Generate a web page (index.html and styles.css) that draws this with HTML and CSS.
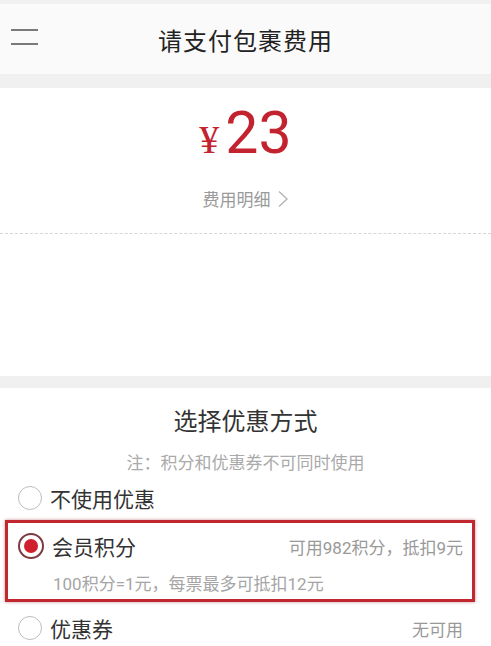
FILE: index.html
```html
<!DOCTYPE html>
<html lang="zh-CN">
<head>
<meta charset="UTF-8" />
<meta name="viewport" content="width=device-width, initial-scale=1" />
<title>请支付包裹费用</title>
<link rel="stylesheet" href="styles.css">
</head>
<body>

<header class="top-bar">
  <span class="menu-icon" aria-label="菜单"><i></i><i></i></span>
  <h1>请支付包裹费用</h1>
</header>

<div class="band"></div>

<section class="amount">
  <div class="price"><span class="yen">¥</span><span class="num">23</span></div>
  <a class="detail-link" href="#">费用明细
    <svg width="12" height="18" viewBox="0 0 12 18"><path d="M2 1.5 L10 9 L2 16.5" fill="none" stroke="#b5b5b5" stroke-width="1.4"/></svg>
  </a>
  <div class="dash"></div>
</section>

<div class="band band-small"></div>

<section class="discount">
  <h2>选择优惠方式</h2>
  <p class="note">注：积分和优惠券不可同时使用</p>

  <div class="option">
    <span class="radio"></span>
    <span class="label">不使用优惠</span>
  </div>

  <div class="option-box">
    <div class="option">
      <span class="radio checked"></span>
      <span class="label">会员积分</span>
      <span class="info">可用982积分，抵扣9元</span>
    </div>
    <p class="rule">100积分=1元，每票最多可抵扣12元</p>
  </div>

  <div class="option option-last">
    <span class="radio"></span>
    <span class="label">优惠券</span>
    <span class="info">无可用</span>
  </div>
</section>

</body>
</html>
```

FILE: styles.css
```css
body {
  margin: 0;
  background: #fff;
  font-family: Roboto, "Noto Sans CJK SC", sans-serif;
  color: #333;
}
.top-bar {
  height: 70px;
  border-top: 4px solid #f1f1f1;
  background: #fafafa;
  display: flex;
  align-items: center;
  justify-content: center;
  position: relative;
}
.top-bar h1 {
  margin: 0;
  font-size: 24px;
  font-weight: normal;
  letter-spacing: 1px;
  color: #222;
}
.menu-icon {
  position: absolute;
  left: 11px;
  top: 25px;
  width: 27px;
  display: flex;
  flex-direction: column;
  gap: 12px;
}
.menu-icon i {
  display: block;
  height: 2px;
  background: #7a7a7a;
}
.band {
  height: 14px;
  background: #f0f0f0;
}
.band-small {
  height: 12px;
}
.amount {
  height: 288px;
  display: flex;
  flex-direction: column;
  align-items: center;
}
.price {
  margin-top: 12px;
  height: 66px;
  display: flex;
  align-items: baseline;
  color: #c3222f;
}
.yen {
  font-family: "Liberation Serif", serif;
  font-size: 40px;
  margin-right: 6px;
}
.num {
  font-family: Roboto, sans-serif;
  font-size: 59px;
  line-height: 66px;
}
.detail-link {
  margin-top: 20px;
  font-size: 17px;
  color: #9a9a9a;
  text-decoration: none;
  display: flex;
  align-items: center;
  gap: 6px;
}
.dash {
  align-self: stretch;
  margin-top: 22px;
  border-top: 1px dashed #d6d6d6;
}
.discount h2 {
  margin: 16px 0 0;
  text-align: center;
  font-size: 24px;
  line-height: 36px;
  font-weight: normal;
  color: #333;
}
.note {
  margin: 10px 0 0;
  text-align: center;
  font-size: 17px;
  line-height: 26px;
  color: #aaa;
}
.option {
  height: 44px;
  padding: 0 28px 0 18px;
  display: flex;
  align-items: center;
  gap: 8px;
}
.radio {
  width: 24px;
  height: 24px;
  border: 1px solid #bdbdbd;
  border-radius: 50%;
  box-sizing: border-box;
  flex-shrink: 0;
  position: relative;
}
.radio.checked {
  width: 26px;
  height: 26px;
  border: 2px solid #7d3a3f;
}
.radio.checked::after {
  content: "";
  position: absolute;
  left: 4px;
  top: 4px;
  width: 14px;
  height: 14px;
  border-radius: 50%;
  background: #d0202f;
}
.label {
  font-size: 21px;
  color: #333;
}
.info {
  margin-left: auto;
  font-size: 17px;
  color: #999;
}
.option-box {
  margin: 0 16px 0 5px;
  border: 3px solid #c1272f;
  box-shadow: 0 0 3px rgba(150, 30, 40, 0.5);
}
.option-box .option {
  height: 46px;
  padding: 0 9px 0 10px;
}
.rule {
  margin: 0;
  height: 30px;
  line-height: 30px;
  padding-left: 45px;
  font-size: 17px;
  color: #a5a5a5;
}
.option-last {
  height: 52px;
}
```
